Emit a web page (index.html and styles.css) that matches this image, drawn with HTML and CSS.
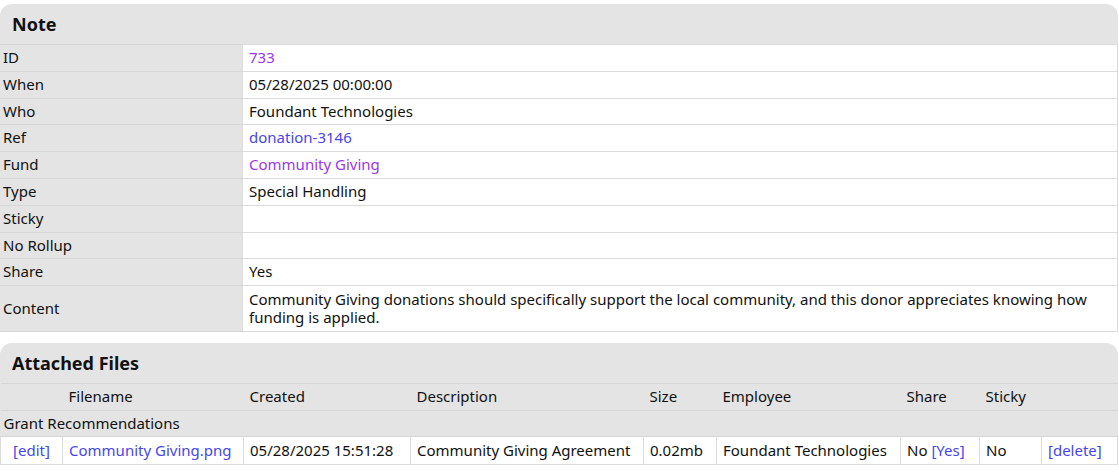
FILE: index.html
```html
<!DOCTYPE html>
<html lang="en">
<head>
    <meta charset="UTF-8">
    <meta name="viewport" content="width=device-width, initial-scale=1.0">
    <title>Note 733</title>
    <link rel="stylesheet" href="styles.css">
</head>
<body>
    <!-- Detalle de la nota -->
    <div class="panel">
        <h2 class="panel-title">Note</h2>
        <table class="detalle">
            <tr><td class="etiqueta">ID</td><td class="valor"><a class="visitado" href="#">733</a></td></tr>
            <tr><td class="etiqueta">When</td><td class="valor">05/28/2025 00:00:00</td></tr>
            <tr><td class="etiqueta">Who</td><td class="valor">Foundant Technologies</td></tr>
            <tr><td class="etiqueta">Ref</td><td class="valor"><a href="#">donation-3146</a></td></tr>
            <tr><td class="etiqueta">Fund</td><td class="valor"><a class="visitado" href="#">Community Giving</a></td></tr>
            <tr><td class="etiqueta">Type</td><td class="valor">Special Handling</td></tr>
            <tr><td class="etiqueta">Sticky</td><td class="valor"></td></tr>
            <tr><td class="etiqueta">No Rollup</td><td class="valor"></td></tr>
            <tr><td class="etiqueta">Share</td><td class="valor">Yes</td></tr>
            <tr class="contenido"><td class="etiqueta">Content</td><td class="valor">Community Giving donations should specifically support the local community, and this donor appreciates knowing how funding is applied.</td></tr>
        </table>
    </div>

    <!-- Archivos adjuntos -->
    <div class="panel panel-archivos">
        <h2 class="panel-title">Attached Files</h2>
        <table class="archivos">
            <colgroup>
                <col style="width: 62px">
                <col style="width: 181px">
                <col style="width: 167px">
                <col style="width: 233px">
                <col style="width: 73px">
                <col style="width: 184px">
                <col style="width: 79px">
                <col style="width: 62px">
                <col>
            </colgroup>
            <tr class="encabezado">
                <th></th>
                <th>Filename</th>
                <th>Created</th>
                <th>Description</th>
                <th>Size</th>
                <th>Employee</th>
                <th>Share</th>
                <th>Sticky</th>
                <th></th>
            </tr>
            <tr class="grupo"><td colspan="9">Grant Recommendations</td></tr>
            <tr class="fila">
                <td class="centro"><a href="#">[edit]</a></td>
                <td><a href="#">Community Giving.png</a></td>
                <td>05/28/2025 15:51:28</td>
                <td>Community Giving Agreement</td>
                <td>0.02mb</td>
                <td>Foundant Technologies</td>
                <td>No <a href="#">[Yes]</a></td>
                <td>No</td>
                <td><a href="#">[delete]</a></td>
            </tr>
        </table>
    </div>
</body>
</html>
```

FILE: styles.css
```css
/* Estilo general */
body {
    margin: 0;
    padding: 4px 1px 0 0;
    font-family: 'Noto Sans', 'Open Sans', sans-serif;
    font-size: 15px;
    color: #111;
    background-color: #fff;
}

a {
    color: #4646ee; /* Enlace normal */
    text-decoration: none;
}

a.visitado {
    color: #9a37ee; /* Enlace visitado */
}

/* Panel con cabecera gris */
.panel {
    background-color: #e4e4e4;
    border-radius: 12px 12px 0 0;
}

.panel-archivos {
    margin-top: 11px;
}

.panel-title {
    margin: 0;
    height: 40px;
    line-height: 40px;
    padding-left: 12px;
    font-size: 18px;
    font-weight: bold;
    color: #111;
}

table {
    width: 100%;
    border-collapse: collapse;
}

td, th {
    line-height: 17.8px;
    padding: 4px 6px;
    text-align: left;
    vertical-align: middle;
}

/* Tabla de detalle */
.detalle td {
    border-top: 1px solid #d6d6d6;
    border-bottom: 1px solid #d6d6d6;
}

.detalle .etiqueta {
    width: 233px;
    padding-left: 3px;
}

.detalle .valor {
    background-color: #fff;
    border: 1px solid #dcdcdc;
}

.detalle .contenido td {
    padding-top: 5px;
    padding-bottom: 4px;
}

/* Tabla de archivos */
.archivos {
    table-layout: fixed;
}

.archivos th {
    font-weight: normal;
    border-top: 1px solid #d6d6d6;
    border-bottom: 1px solid #d6d6d6;
}

.archivos .grupo td {
    padding-left: 3px;
    border-bottom: 1px solid #d6d6d6;
}

.archivos .fila td {
    background-color: #fff;
    border: 1px solid #dcdcdc;
    padding-top: 5px;
    padding-bottom: 4px;
    white-space: nowrap;
}

.archivos .centro {
    text-align: center;
}
```
